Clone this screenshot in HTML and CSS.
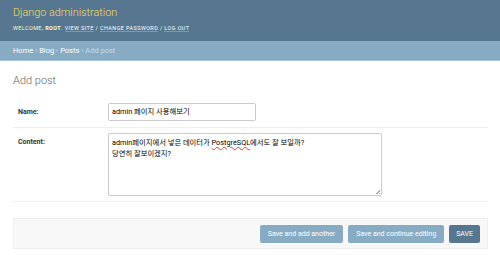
FILE: index.html
```html
<!DOCTYPE html>
<html lang="ko">
<head>
  <meta charset="UTF-8">
  <meta name="viewport" content="width=device-width, initial-scale=1.0">
  <title>Add post | Django site admin</title>
  <link rel="stylesheet" href="styles.css">
</head>
<body>
  <div class="header">
    <div class="branding">Django administration</div>
    <div class="user-tools">
      Welcome, <strong>root</strong>.
      <a href="#">View site</a> /
      <a href="#">Change password</a> /
      <a href="#">Log out</a>
    </div>
  </div>

  <div class="breadcrumbs">
    <a href="#">Home</a> &rsaquo; <a href="#">Blog</a> &rsaquo; <a href="#">Posts</a> &rsaquo; Add post
  </div>

  <div class="content">
    <h1>Add post</h1>

    <form>
      <!-- fields -->
      <fieldset class="module">
        <div class="form-row">
          <label class="required" for="id_name">Name:</label>
          <div class="vTextField" id="id_name">admin 페이지 사용해보기</div>
        </div>
        <div class="form-row">
          <label class="required" for="id_content">Content:</label>
          <div class="vLargeTextField" id="id_content">admin페이지에서 넣은 데이터가 <span class="misspelt">PostgreSQL</span>에서도 잘 보일까?<br>당연히 잘보이겠지?</div>
        </div>
      </fieldset>

      <!-- submit row -->
      <div class="submit-row">
        <button type="button" class="btn">Save and add another</button>
        <button type="button" class="btn">Save and continue editing</button>
        <button type="button" class="btn default">Save</button>
      </div>
    </form>
  </div>
</body>
</html>
```

FILE: styles.css
```css
body {
  margin: 0;
  padding: 0;
  font-family: Roboto, "Noto Sans CJK KR", sans-serif;
  font-size: 7px;
  color: #333;
  background: #ffffff;
}

a {
  color: #fff;
  text-decoration: none;
}

.header {
  height: 41px;
  box-sizing: border-box;
  padding: 5px 13px 0;
  background: #57768f;
  color: #ffc;
}

.branding {
  font-size: 10.8px;
  font-weight: 300;
  color: #f5dd5d;
  line-height: 15px;
}

.user-tools {
  margin-top: 4px;
  font-size: 5.5px;
  letter-spacing: 0.4px;
  text-transform: uppercase;
  line-height: 9px;
}

.user-tools strong {
  font-weight: 700;
}

.user-tools a {
  border-bottom: 1px solid rgba(255, 255, 255, 0.25);
}

.breadcrumbs {
  height: 19px;
  padding: 0 13px;
  background: #88abc4;
  border-bottom: 1px solid #a9c7dc;
  color: #c4dce8;
  font-size: 7.5px;
  line-height: 19px;
}

.content {
  padding: 0 12px 0 13px;
}

h1 {
  margin: 13px 0 10px;
  font-size: 11px;
  font-weight: 300;
  color: #666;
  line-height: 13px;
}

fieldset {
  margin: 0;
  padding: 0;
  border: none;
}

.form-row {
  display: flex;
  align-items: flex-start;
  padding: 6px 0 6px 5px;
  border-bottom: 1px solid #eee;
}

.form-row + .form-row {
  padding-top: 5px;
  padding-bottom: 5px;
}

.form-row label {
  width: 90px;
  flex: none;
  padding-top: 5px;
  font-weight: 700;
  font-size: 7px;
  line-height: 9px;
  color: #333;
}

.vTextField,
.vLargeTextField {
  box-sizing: border-box;
  border: 1px solid #ccc;
  border-radius: 2px;
  background: #fff;
  color: #000;
  font-size: 7.3px;
}

.vTextField {
  width: 148px;
  height: 18px;
  padding: 0 3px;
  line-height: 16px;
}

.vLargeTextField {
  position: relative;
  flex: none;
  width: 274px;
  height: 63px;
  padding: 3px 3px;
  line-height: 11px;
}

/* resize grip */
.vLargeTextField::after {
  content: "";
  position: absolute;
  right: 1px;
  bottom: 1px;
  width: 4px;
  height: 4px;
  background: linear-gradient(135deg, transparent 50%, #aaa 50%, #aaa 65%, transparent 65%, transparent 80%, #aaa 80%);
}

.misspelt {
  text-decoration: underline wavy #e33;
  text-decoration-thickness: 1px;
  text-underline-offset: 1px;
}

.submit-row {
  display: flex;
  justify-content: flex-end;
  gap: 5px;
  margin-top: 16px;
  padding: 6px 7px 5px;
  background: #f8f8f8;
  border: 1px solid #eee;
}

.btn {
  height: 18px;
  padding: 0 8px;
  border: none;
  border-radius: 2px;
  background: #88abc4;
  color: #fff;
  font-family: Roboto, sans-serif;
  font-size: 7px;
  cursor: pointer;
}

.btn.default {
  background: #57768f;
  text-transform: uppercase;
  padding: 0 7px;
}
```
